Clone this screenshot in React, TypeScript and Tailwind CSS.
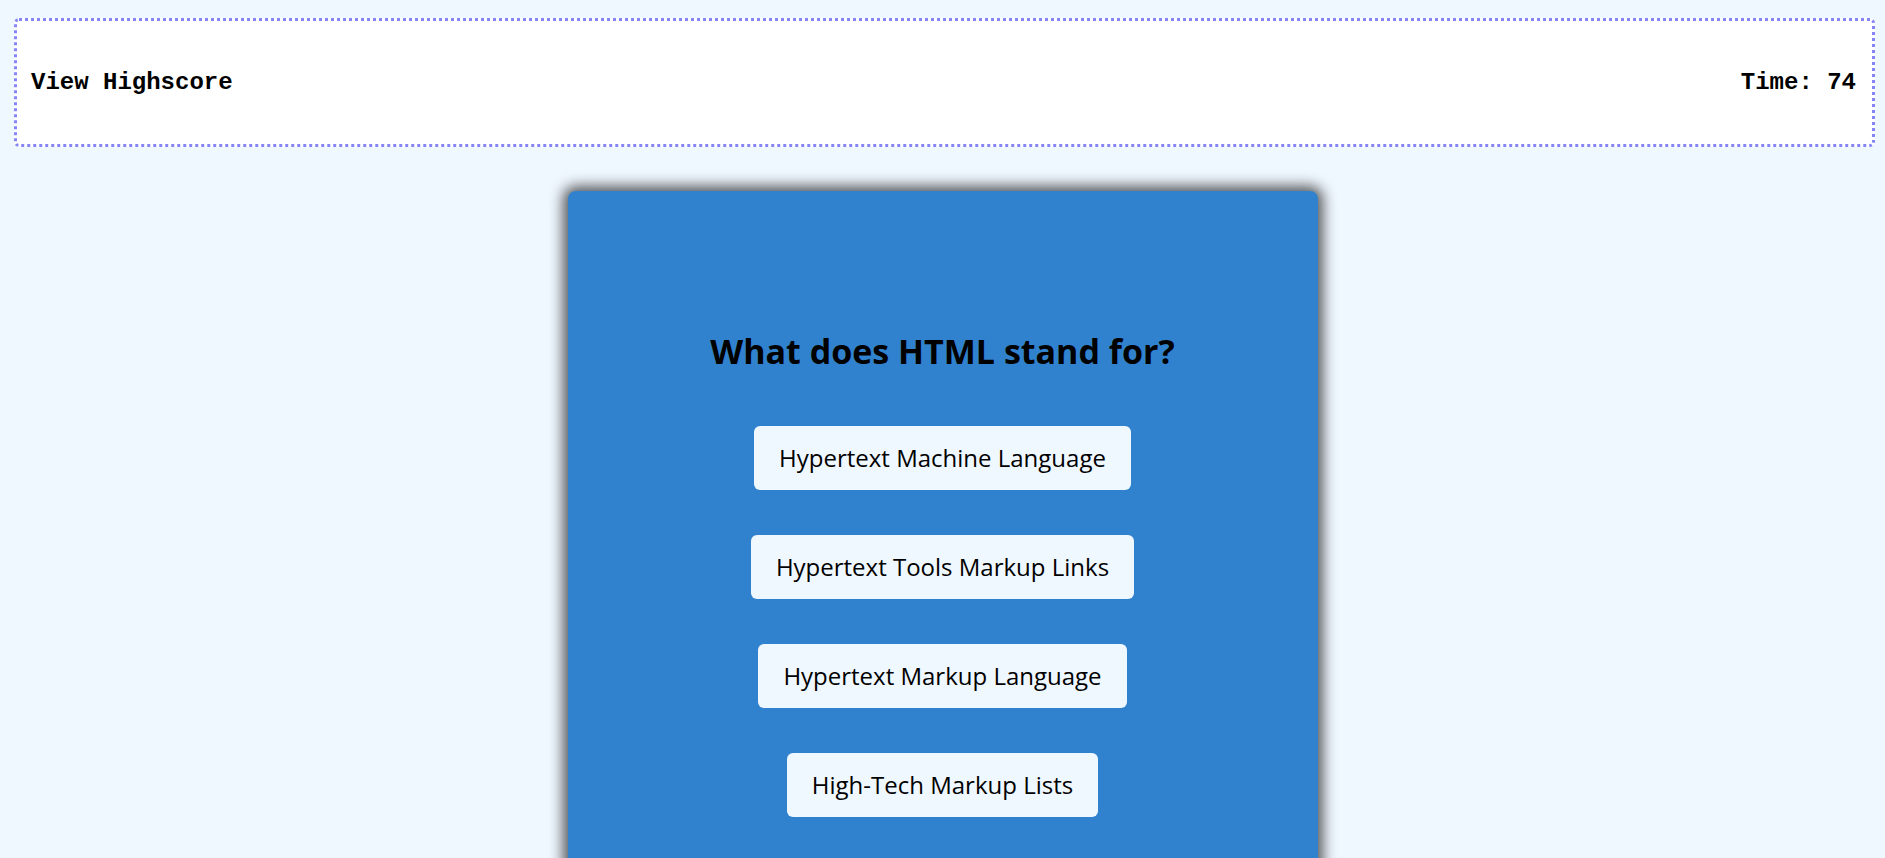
const answers = [
  'Hypertext Machine Language',
  'Hypertext Tools Markup Links',
  'Hypertext Markup Language',
  'High-Tech Markup Lists',
];

function App() {
  return (
    <div className="min-h-screen overflow-hidden bg-[#f0f8ff] pt-[18px]">
      <header className="ml-[14px] mr-[10px] flex h-[129px] items-center justify-between rounded-[5px] border-[3px] border-dotted border-[#8585f5] bg-white pl-[14px] pr-[16px] font-['Liberation_Mono',monospace] text-[24px] font-bold text-black">
        <span>View Highscore</span>
        <span>Time: 74</span>
      </header>

      <main className="mx-auto mt-[44px] h-[760px] w-[750px] rounded-lg bg-[#3182ce] pt-[140px] shadow-[0_0_14px_5px_rgba(0,0,0,0.65)] font-['Open_Sans',sans-serif]">
        <h1 className="text-center text-[34px] leading-[40px] font-bold text-black">
          What does HTML stand for?
        </h1>
        <div className="mt-[55px] flex flex-col items-center gap-[45px]">
          {answers.map(answer => (
            <button
              key={answer}
              type="button"
              className="h-[64px] rounded-md bg-[#f0f8ff] px-[25px] text-[24px] text-black"
            >
              {answer}
            </button>
          ))}
        </div>
      </main>
    </div>
  );
}

export default App;
